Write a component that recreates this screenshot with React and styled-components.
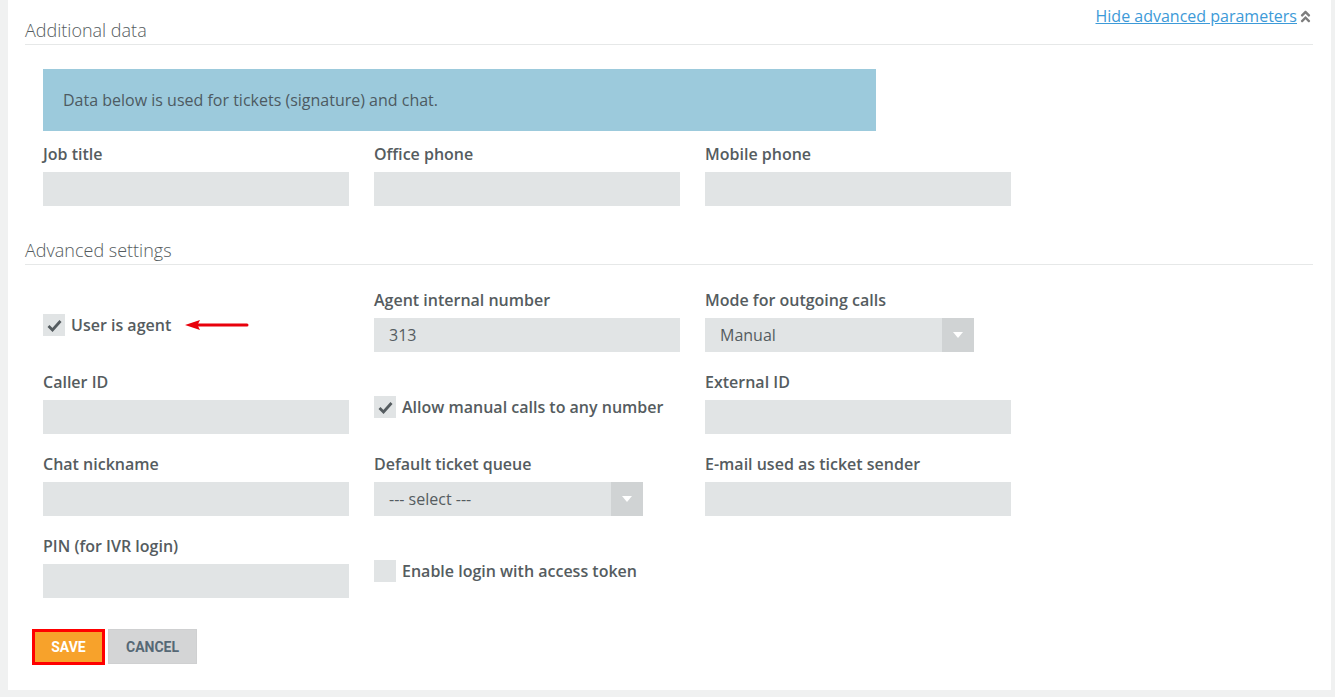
import styled, { createGlobalStyle } from "styled-components";
import { FaAngleDoubleUp } from "react-icons/fa";

const GlobalStyle = createGlobalStyle`
  body {
    margin: 0;
    background: #f0f1f1;
    font-family: "Open Sans", "Noto Sans", sans-serif;
    color: #555c60;
  }
`;

function Check() {
  return (
    <svg width="15" height="13" viewBox="0 0 15 13">
      <path d="M1.5 7 L5.5 11 L13.5 2" fill="none" stroke="#555c60" strokeWidth="2.8" />
    </svg>
  );
}

function Checkbox({ checked, label, children }) {
  return (
    <CheckRow>
      <CheckBoxBox>{checked && <Check />}</CheckBoxBox>
      <CheckLabel>{label}</CheckLabel>
      {children}
    </CheckRow>
  );
}

function Field({ label, value, select }) {
  return (
    <FieldWrap>
      <Label>{label}</Label>
      {select ? (
        <SelectBox>
          <SelectText>{value}</SelectText>
          <SelectArrow>
            <svg width="10" height="6" viewBox="0 0 10 6">
              <path d="M0 0 H10 L5 6 Z" fill="#fff" />
            </svg>
          </SelectArrow>
        </SelectBox>
      ) : (
        <Input>{value}</Input>
      )}
    </FieldWrap>
  );
}

export default function App() {
  return (
    <>
      <GlobalStyle />
      <Page>
        <Panel>
          <SectionHead>
            <Heading>Additional data</Heading>
            <HideLink href="#">
              <span>Hide advanced parameters</span>
              <FaAngleDoubleUp size={15} color="#7d7d7d" />
            </HideLink>
          </SectionHead>

          <InfoBox>Data below is used for tickets (signature) and chat.</InfoBox>

          <Grid>
            <Field label="Job title" />
            <Field label="Office phone" />
            <Field label="Mobile phone" />
          </Grid>

          <SectionHead $gap={14}>
            <Heading>Advanced settings</Heading>
          </SectionHead>

          <Grid $top={24}>
            <CheckField>
              <Checkbox checked label="User is agent">
                <Arrow width="64" height="12" viewBox="0 0 64 12">
                  <path d="M10 6 H62" stroke="#e8000b" strokeWidth="3" strokeLinecap="round" />
                  <path d="M0 6 L15 1 L12.5 6 L15 11 Z" fill="#e8000b" />
                </Arrow>
              </Checkbox>
            </CheckField>
            <Field label="Agent internal number" value="313" />
            <Field label="Mode for outgoing calls" value="Manual" select />

            <Field label="Caller ID" />
            <CheckField>
              <Checkbox checked label="Allow manual calls to any number" />
            </CheckField>
            <Field label="External ID" />

            <Field label="Chat nickname" />
            <Field label="Default ticket queue" value="--- select ---" select />
            <Field label="E-mail used as ticket sender" />

            <Field label="PIN (for IVR login)" />
            <CheckField>
              <Checkbox label="Enable login with access token" />
            </CheckField>
          </Grid>

          <Buttons>
            <SaveButton>Save</SaveButton>
            <CancelButton>Cancel</CancelButton>
          </Buttons>
        </Panel>
      </Page>
    </>
  );
}

const Page = styled.div`
  padding: 0 4px 8px 8px;
`;

const Panel = styled.div`
  background: #fff;
  padding: 0 18px 25px 17px;
`;

const SectionHead = styled.div`
  display: flex;
  justify-content: space-between;
  align-items: flex-start;
  border-bottom: 1px solid #e6e8e8;
  margin-top: ${(p) => p.$gap || 0}px;
`;

const Heading = styled.h2`
  margin: 18px 0 2px;
  font-size: 18px;
  line-height: 24px;
  font-weight: 300;
  color: #555c60;
`;

const HideLink = styled.a`
  display: flex;
  align-items: center;
  gap: 1px;
  margin-top: 5px;
  font-size: 16px;
  line-height: 22px;
  color: #3d9ad8;
  text-decoration: none;

  span {
    text-decoration: underline;
  }
`;

const InfoBox = styled.div`
  margin: 24px 0 12px 18px;
  width: 833px;
  height: 62px;
  box-sizing: border-box;
  padding: 0 20px;
  display: flex;
  align-items: center;
  background: #9ccadc;
  font-size: 16px;
  color: #4d5a62;
`;

const Grid = styled.div`
  display: grid;
  grid-template-columns: repeat(3, 306px);
  column-gap: 25px;
  row-gap: 19px;
  margin-left: 18px;
  margin-top: ${(p) => p.$top || 0}px;
`;

const FieldWrap = styled.div`
  display: flex;
  flex-direction: column;
  align-items: flex-start;
`;

const Label = styled.label`
  font-size: 16px;
  line-height: 22px;
  font-weight: 600;
  color: #555c60;
  margin-bottom: 7px;
`;

const Input = styled.div`
  width: 306px;
  height: 34px;
  box-sizing: border-box;
  padding: 0 15px;
  background: #e1e4e5;
  display: flex;
  align-items: center;
  font-size: 16px;
  color: #555c60;
`;

const SelectBox = styled.div`
  width: 269px;
  height: 34px;
  display: flex;
  background: #e1e4e5;
`;

const SelectText = styled.div`
  flex: 1;
  padding: 0 15px;
  display: flex;
  align-items: center;
  font-size: 16px;
  color: #555c60;
`;

const SelectArrow = styled.div`
  width: 32px;
  display: flex;
  align-items: center;
  justify-content: center;
  background: #d0d3d4;
`;

const CheckField = styled.div`
  padding-top: 25px;
`;

const CheckRow = styled.div`
  display: flex;
  align-items: center;
  gap: 6px;
`;

const CheckBoxBox = styled.span`
  width: 22px;
  height: 22px;
  background: #e1e4e5;
  display: flex;
  align-items: center;
  justify-content: center;
`;

const CheckLabel = styled.span`
  font-size: 16px;
  line-height: 22px;
  font-weight: 600;
  color: #555c60;
`;

const Arrow = styled.svg`
  margin-left: 8px;
`;

const Buttons = styled.div`
  display: flex;
  align-items: flex-start;
  gap: 3px;
  margin: 31px 0 0 7px;
`;

const SaveButton = styled.button`
  height: 36px;
  width: 73px;
  border: 3px solid #ff0000;
  background: #f7a22b;
  color: #fff;
  font-family: Roboto, "Liberation Sans", sans-serif;
  font-weight: 700;
  font-size: 14px;
  text-transform: uppercase;
`;

const CancelButton = styled.button`
  height: 35px;
  width: 89px;
  border: 1px solid #cfd0d1;
  background: #d4d5d6;
  color: #566875;
  font-family: Roboto, "Liberation Sans", sans-serif;
  font-weight: 700;
  font-size: 14px;
  text-transform: uppercase;
`;
